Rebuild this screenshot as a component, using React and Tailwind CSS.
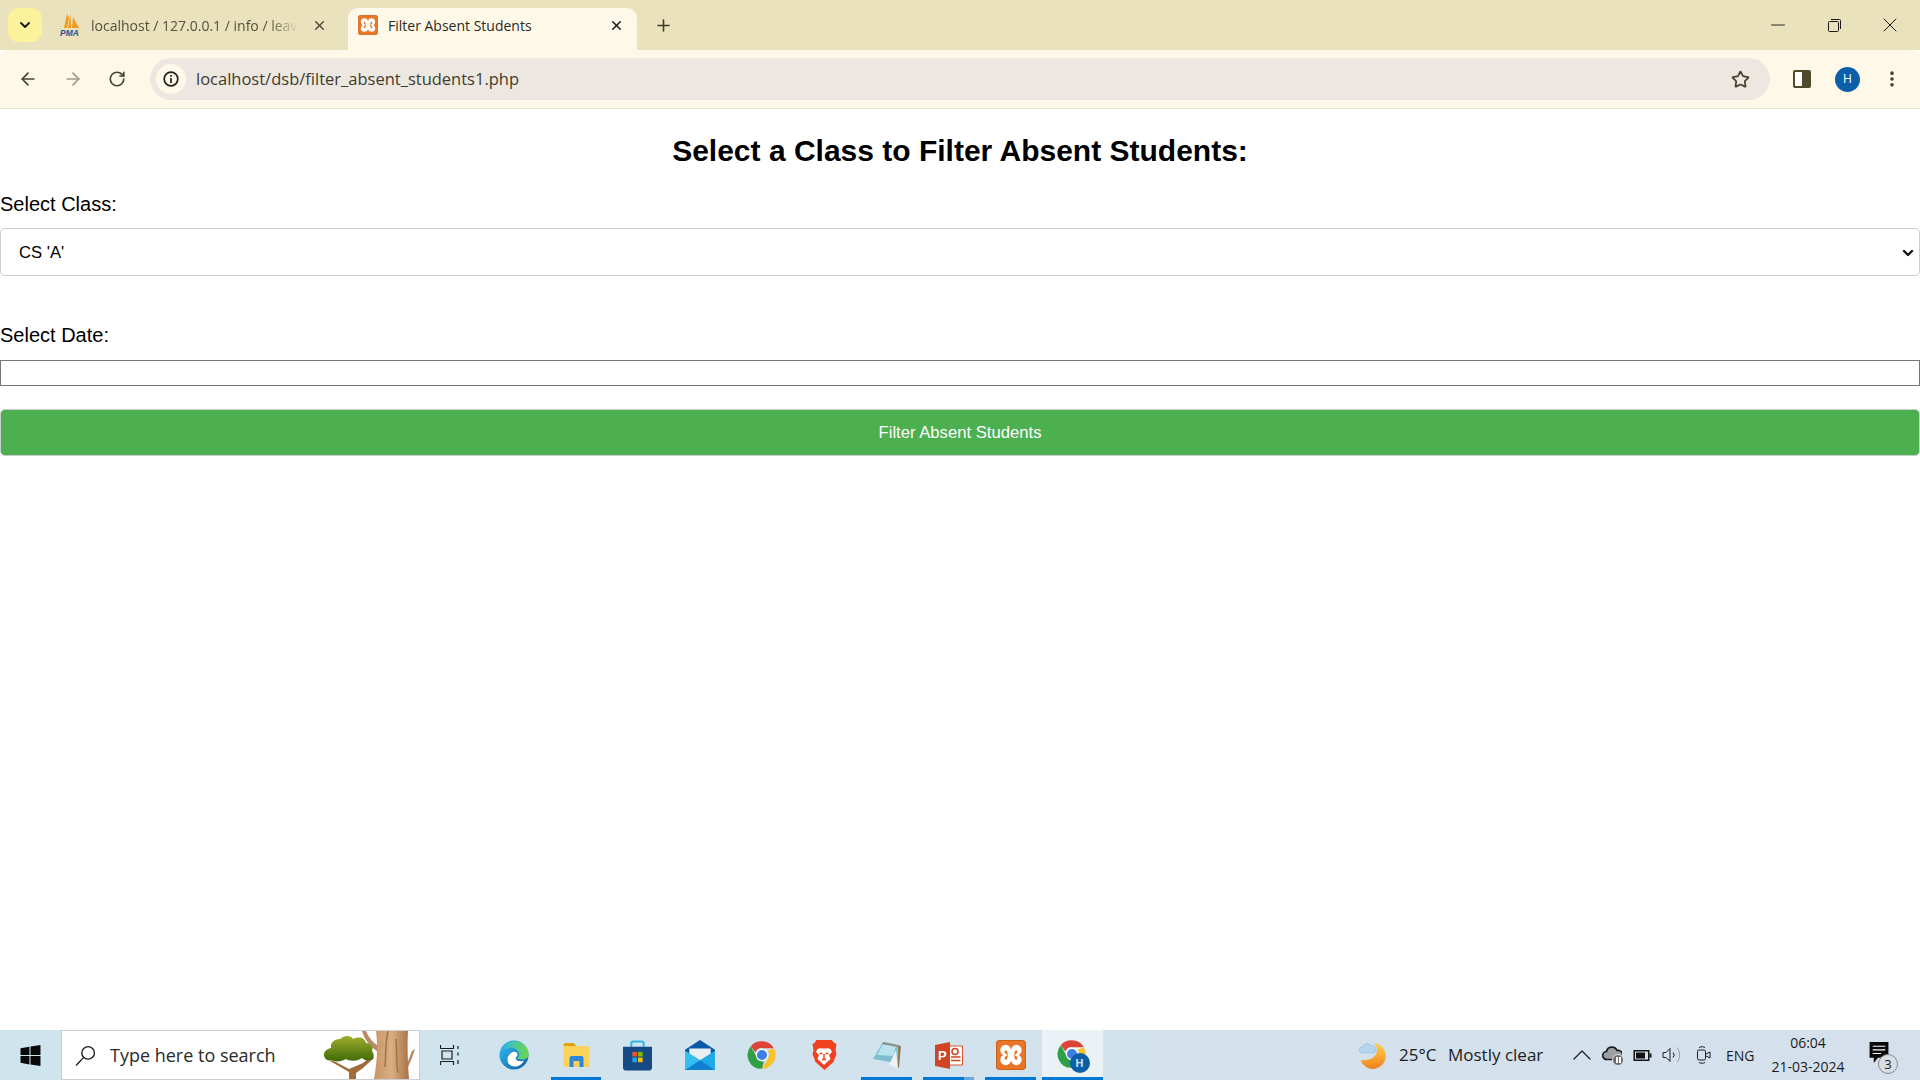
import React from 'react';
import { ArrowLeft, ArrowRight, RotateCw, Star, X, Plus, ChevronDown, ChevronUp, Minus, EllipsisVertical } from 'lucide-react';

const XamppIcon = ({ size = 18 }) => (
  <svg width={size} height={size} viewBox="0 0 28 28">
    <rect x="0.5" y="0.5" width="27" height="27" rx="3" fill="#ea7527" stroke="#c9601c" />
    <circle cx="9" cy="9.500" r="5" fill="#fff" />
    <circle cx="19" cy="9.500" r="5" fill="#fff" />
    <circle cx="9" cy="18.500" r="5" fill="#fff" />
    <circle cx="19" cy="18.500" r="5" fill="#fff" />
    <rect x="10" y="9" width="8" height="10" fill="#fff" />
    <path d="M11 14c-1-.5-3-1-3-3.500 0-1 1.500-1.500 2-.5.500.8 1 1.500 1 4zM17 14c1-.5 3-1 3-3.500 0-1-1.500-1.500-2-.5-.5.800-1 1.500-1 4zM11 14c-1 .5-3 1-3 3.500 0 1 1.500 1.500 2 .5.500-.8 1-1.500 1-4zM17 14c1 .5 3 1 3 3.500 0 1-1.500 1.500-2 .5-.5-.8-1-1.500-1-4z" fill="#ea7527" />
  </svg>
);

const PmaIcon = () => (
  <svg width="20" height="24" viewBox="0 0 20 24">
    <path d="M7 1 4 15h3L9 5zM10.500 0 8 15h3zM13 4l-1 11h7z" fill="#f29b1d" />
    <text x="0" y="23" fontSize="8.500" fontWeight="700" fontStyle="italic" fill="#2b4f93" fontFamily="Liberation Sans, sans-serif">PMA</text>
  </svg>
);

const ChromeIcon = ({ size = 30 }) => (
  <svg width={size} height={size} viewBox="0 0 48 48">
    <path d="M24 2a22 22 0 0 1 19 11H24a11 11 0 0 0-10.500 7L6 10A22 22 0 0 1 24 2z" fill="#db4437" />
    <path d="M43 13a22 22 0 0 1-19 33l9.500-16.500A11 11 0 0 0 33 17z" fill="#fbc02d" />
    <path d="M24 46A22 22 0 0 1 6 10l9 16a11 11 0 0 0 12 8.500z" fill="#2f9e44" />
    <circle cx="24" cy="24" r="10" fill="#fff" />
    <circle cx="24" cy="24" r="8" fill="#3f7ee8" />
  </svg>
);

const EdgeIcon = () => (
  <svg width="30" height="30" viewBox="0 0 30 30">
    <defs>
      <linearGradient id="edgeA" x1="0" y1="0" x2="1" y2="1">
        <stop offset="0" stopColor="#35c1f1" />
        <stop offset="1" stopColor="#0c59a4" />
      </linearGradient>
      <linearGradient id="edgeB" x1="0" y1="0" x2="1" y2="0">
        <stop offset="0" stopColor="#2fb8e0" />
        <stop offset="1" stopColor="#6fd84a" />
      </linearGradient>
    </defs>
    <circle cx="15" cy="15" r="14.500" fill="url(#edgeA)" />
    <path d="M4 9C7 2 15 0 21 2c5 2 9 7 8.500 13 0 3-3 4.500-6.500 4.500-3 0-5-1-5-1.500 2-1 3-3 1.500-6C18 9 14 7 10 8c-2 .5-4 1-6 1z" fill="url(#edgeB)" />
    <path d="M14 12c3-1 5 1 4.500 3-.5 2-3 3-1 5 2 1.500 5 1.500 7.500.5-2 4-6 6.500-10 6-5-.5-7-4-6.500-8 .5-3 3-5.500 5.500-6.500z" fill="#fff" />
  </svg>
);

const ExplorerIcon = () => (
  <svg width="27" height="24" viewBox="0 0 26 24">
    <path d="M0 2a2 2 0 0 1 2-2h8l3 3H0z" fill="#e2a208" />
    <rect x="0" y="3" width="26" height="21" rx="1.500" fill="#fbd35a" />
    <path d="M6 24V15a2 2 0 0 1 2-2h10a2 2 0 0 1 2 2v9h-4v-6h-6v6z" fill="#2e86d8" />
  </svg>
);

const StoreIcon = () => (
  <svg width="29" height="31" viewBox="0 0 28 29">
    <path d="M8 6V3a2 2 0 0 1 2-2h8a2 2 0 0 1 2 2v3" fill="none" stroke="#2fb6ea" strokeWidth="2" />
    <path d="M0 6h28v20a3 3 0 0 1-3 3H3a3 3 0 0 1-3-3z" fill="#154a84" />
    <rect x="9" y="11" width="4.500" height="4.500" fill="#e8532b" />
    <rect x="14.500" y="11" width="4.500" height="4.500" fill="#7fb800" />
    <rect x="9" y="16.500" width="4.500" height="4.500" fill="#1ea2e8" />
    <rect x="14.500" y="16.500" width="4.500" height="4.500" fill="#ffb900" />
  </svg>
);

const MailIcon = () => (
  <svg width="30" height="30" viewBox="0 0 28 28">
    <path d="M14 0 28 9v3L14 20 0 12V9z" fill="#0a58a8" />
    <path d="M4 8h20v8l-10 6-10-6z" fill="#e9eef2" />
    <path d="M0 10l14 9 14-9v18H0z" fill="#22a9ea" />
    <path d="M0 28 0 10l14 9 14 9z" fill="#35bdf0" />
    <path d="M0 28 14 19l14 9z" fill="#0f7fd0" />
  </svg>
);

const BraveIcon = () => (
  <svg width="26" height="30" viewBox="0 0 25 30">
    <path d="M5 0h15l3 3 2 1-1 6 1 4-3 8-9 8-9-8-3-8 1-4-1-6 2-1z" fill="#f1411f" />
    <path d="M6 9c2-1.500 4-.5 6.500-.5S17 7.500 19 9l1.500 3-3 3 1.500 4-6.500 6L6 19l1.500-4-3-3z" fill="#fff" />
    <path d="M8 13.500h3M14 13.500h3M12.500 14v5M10.500 19.500h4" stroke="#f1411f" strokeWidth="1.500" fill="none" />
  </svg>
);

const NotepadIcon = () => (
  <svg width="29" height="28" viewBox="0 0 29 28">
    <path d="M11 1 26 4 24 22 1 18z" fill="#7cbdd2" />
    <path d="M11 3 24 5 21 15 5 14z" fill="#b8e2ec" />
    <path d="M11 1 26 4l-.5 2L10 3z" fill="#8a8f88" />
    <path d="M26 4 29 5 27 27l-2-1z" fill="#8d7f52" />
    <path d="M24 9 26 27 17 24z" fill="#eef1ef" />
  </svg>
);

const PowerPointIcon = () => (
  <svg width="28" height="27" viewBox="0 0 28 27">
    <rect x="12" y="4" width="15.500" height="19" fill="#fff" stroke="#d4573a" />
    <circle cx="20" cy="9.500" r="3" fill="none" stroke="#d04423" strokeWidth="1.500" />
    <path d="M16 15h9.500M16 18.500h9.500" stroke="#d04423" strokeWidth="1.500" />
    <path d="M0 3 15 0v27L0 24z" fill="#d04423" />
    <text x="3" y="18" fontSize="13" fontWeight="700" fill="#fff" fontFamily="Liberation Sans, sans-serif">P</text>
  </svg>
);

const ChromeUserIcon = () => (
  <div className="relative w-[32px] h-[32px]">
    <ChromeIcon size={30} />
    <div className="absolute right-[-1px] bottom-[-2px] w-[20px] h-[20px] rounded-full bg-[#0b5ea8] text-[#cfe0ee] text-[11px] font-bold flex items-center justify-center">H</div>
  </div>
);

const Tree = () => (
  <svg width="97" height="48" viewBox="0 0 97 48" className="shrink-0">
    <defs>
      <linearGradient id="crown" x1="0" y1="0" x2="0" y2="1">
        <stop offset="0" stopColor="#9fae2c" />
        <stop offset="1" stopColor="#3f6a08" />
      </linearGradient>
      <linearGradient id="trunk" x1="0" y1="0" x2="1" y2="0">
        <stop offset="0" stopColor="#c99566" />
        <stop offset="0.500" stopColor="#d9ae84" />
        <stop offset="1" stopColor="#a87345" />
      </linearGradient>
    </defs>
    <path d="M42 0h4c3 7 7 12 14 16v6C51 17 45 10 42 0zM85 38l7-18 3-2-3 9-7 16z" fill="#b98a63" />
    <path d="M56 0h32c-1 16 0 34 1 48H54c3-16 4-32 2-48z" fill="url(#trunk)" />
    <path d="M68 0c-3 14-2 24-3 36M76 8c1 10 0 22 2 34" stroke="#a67148" strokeWidth="1.500" fill="none" />
    <path d="M29 48V41L10 30l2-1 17 9 14-6 9-7 2 2-11 10-7 5v6z" fill="#a26b3c" />
    <path d="M5 27c-3-5 1-9 6-10-1-5 3-9 9-9 4-4 11-4 13 0 6-3 12-1 13 4 5 0 8 4 6 8 3 4 2 9-2 9-3 1-6 0-8-2-6 4-13 3-16 1-5 3-11 3-14 1-3 1-6 0-7-2z" fill="url(#crown)" />
  </svg>
);

const TaskSlot = ({ className = '', active, line, split, children }) => (
  <div className={`relative h-full shrink-0 flex items-center justify-center ${className} ${active ? 'bg-[#ebf2f6]' : ''}`}>
    {children}
    {line && <div className="absolute left-0 right-0 bottom-0 h-[3px] bg-[#0078d4]" />}
    {split && <div className="absolute right-0 bottom-0 w-[10px] h-[3px] bg-[#64a9e4]" />}
  </div>
);

const BrowserChrome = () => (
  <div className="font-['Open_Sans',sans-serif]">
    {/* tab strip */}
    <div className="h-[50px] bg-[#e9e2bc] flex items-end">
      <div className="w-[34px] h-[34px] shrink-0 ml-[8px] mb-[8px] rounded-[11px] bg-[#fdf29c] flex items-center justify-center text-[#1f1f1f]">
        <ChevronDown size={16} strokeWidth={3} />
      </div>
      <div className="w-[306px] h-[42px] shrink-0 pb-[8px] pl-[18px] flex items-center text-[14px] text-[#54513f]">
        <PmaIcon />
        <span className="ml-[11px] w-[208px] whitespace-nowrap overflow-hidden [mask-image:linear-gradient(to_right,black_85%,transparent)]">localhost / 127.0.0.1 / info / leave</span>
        <X size={15} strokeWidth={2.500} className="ml-[13px] shrink-0" />
      </div>
      <div className="w-[289px] h-[42px] shrink-0 rounded-t-[10px] bg-[#fef8e9] flex items-center pb-[8px] pl-[10px] text-[14px] text-[#2b2a20]">
        <XamppIcon size={20} />
        <span className="ml-[10px] w-[221px] whitespace-nowrap">Filter Absent Students</span>
        <X size={15} strokeWidth={2.500} className="text-[#1f1f1f]" />
      </div>
      <div className="w-[52px] h-[42px] pb-[8px] flex items-center justify-center text-[#3f3c2a]">
        <Plus size={19} strokeWidth={2} />
      </div>
      <div className="flex-1" />
      <div className="h-[50px] flex items-center text-[#1a1a1a]">
        <div className="w-[56px] flex justify-center"><Minus size={22} strokeWidth={1} /></div>
        <div className="w-[56px] flex justify-center">
          <svg width="13" height="13" viewBox="0 0 13 13" fill="none" stroke="currentColor">
            <rect x="0.500" y="2.500" width="10" height="10" rx="1" />
            <path d="M3 .5h8.500a1 1 0 0 1 1 1V10" />
          </svg>
        </div>
        <div className="w-[58px] pr-[2px] flex justify-center"><X size={24} strokeWidth={1} /></div>
      </div>
    </div>
    {/* toolbar */}
    <div className="h-[59px] bg-[#fef8e9] border-b border-[#e8e3cc] rounded-t-[8px] flex items-center text-[#45432f]">
      <div className="w-[150px] flex items-center pl-[18px] gap-[25px]">
        <ArrowLeft size={20} strokeWidth={2} />
        <ArrowRight size={20} strokeWidth={2} className="text-[#9c9a89]" />
        <RotateCw size={18} strokeWidth={2.200} />
      </div>
      <div className="w-[1620px] h-[42px] rounded-full bg-[#ece8e1] flex items-center pl-[6px] pr-[20px]">
        <div className="w-[30px] h-[30px] rounded-full bg-[#fef8e9] flex items-center justify-center">
          <svg width="16" height="16" viewBox="0 0 16 16" fill="none" stroke="#1f1f1f" strokeWidth="1.700">
            <circle cx="8" cy="8" r="6.800" />
            <path d="M8 7v5M8 4v1.700" />
          </svg>
        </div>
        <span className="ml-[10px] text-[16.5px] text-[#3f3c2e] flex-1">localhost/dsb/filter_absent_students1.php</span>
        <Star size={19} strokeWidth={2.200} />
      </div>
      <div className="ml-[23px] w-[18px] h-[18px] rounded-[2px] border-[2px] border-[#4e4a2b] bg-[#fff] flex justify-end">
        <div className="w-[7px] h-full bg-[#4e4a2b]" />
      </div>
      <div className="ml-[24px] w-[25px] h-[25px] rounded-full bg-[#0b5ea8] text-white text-[12px] flex items-center justify-center">H</div>
      <EllipsisVertical size={20} strokeWidth={2.400} className="ml-[22px]" />
    </div>
  </div>
);

const Taskbar = () => (
  <div className="h-[50px] flex items-stretch bg-gradient-to-r from-[#cfe5ee] to-[#d5e0ec] font-['Open_Sans',sans-serif] text-[#1c1c1c]">
    <div className="w-[61px] shrink-0 flex items-center justify-center">
      <svg width="21" height="21" viewBox="0 0 19 20" fill="#0a0a0a">
        <path d="M0 3 8.500 1.600V9.500H0zM9.500 1.400 19 0v9.500H9.500zM0 10.500h8.500v8L0 17zM9.500 10.500H19V20l-9.500-1.400z" />
      </svg>
    </div>
    <div className="w-[359px] shrink-0 h-[50px] bg-white border border-[#c9cdd0] flex items-center overflow-hidden">
      <svg width="21" height="21" viewBox="0 0 20 20" fill="none" stroke="#1c1c1c" strokeWidth="1.300" className="ml-[13px] shrink-0">
        <circle cx="12.500" cy="7.500" r="6" />
        <path d="M8 12 1 19.500" />
      </svg>
      <span className="ml-[14px] w-[210px] shrink-0 text-[18px] text-[#2a2a2a] whitespace-nowrap">Type here to search</span>
      <Tree />
    </div>
    <TaskSlot className="w-[60px]">
      <svg width="20" height="20" viewBox="0 0 19 20" fill="none" stroke="#1c1c1c" strokeWidth="1.200">
        <path d="M0 3.500h13V0M0 0v3.500M0 16.500h13V20M0 20v-3.500M1.500 6h10v8h-10zM17.500 1v3M17.500 7.500v3M17.500 15v4" />
      </svg>
    </TaskSlot>
    <TaskSlot className="w-[68px]"><EdgeIcon /></TaskSlot>
    <div className="w-[3px] shrink-0" />
    <TaskSlot className="w-[50px]" line><ExplorerIcon /></TaskSlot>
    <TaskSlot className="w-[72px]"><StoreIcon /></TaskSlot>
    <TaskSlot className="w-[54px]"><MailIcon /></TaskSlot>
    <TaskSlot className="w-[70px]"><ChromeIcon /></TaskSlot>
    <TaskSlot className="w-[54px]"><BraveIcon /></TaskSlot>
    <div className="w-[10px] shrink-0" />
    <TaskSlot className="w-[51px]" line><NotepadIcon /></TaskSlot>
    <div className="w-[11px] shrink-0" />
    <TaskSlot className="w-[51px]" line split><PowerPointIcon /></TaskSlot>
    <div className="w-[11px] shrink-0" />
    <TaskSlot className="w-[51px]" line><XamppIcon size={30} /></TaskSlot>
    <div className="w-[6px] shrink-0" />
    <TaskSlot className="w-[61px]" active line><ChromeUserIcon /></TaskSlot>
    <div className="flex-1" />
    {/* tray */}
    <div className="flex items-center">
      <svg width="29" height="30" viewBox="0 0 28 30">
        <defs>
          <linearGradient id="moon" x1="0" y1="0" x2="0" y2="1">
            <stop offset="0" stopColor="#ffd24a" />
            <stop offset="1" stopColor="#f2821f" />
          </linearGradient>
        </defs>
        <path d="M16 3a13 13 0 1 1-14 17c6 1 14-1 16-7 1-4 0-7-2-10z" fill="url(#moon)" />
        <path d="M3 13a3 3 0 0 1 1-6 5 5 0 0 1 9-1 3.500 3.500 0 0 1 2 7z" fill="#b5d4ee" stroke="#8ebce2" strokeWidth="0.600" />
      </svg>
      <span className="ml-[12px] w-[37px] text-[17px] whitespace-nowrap">25°C</span>
      <span className="ml-[12px] w-[95px] text-[17px] whitespace-nowrap">Mostly clear</span>
      <ChevronUp size={32} strokeWidth={0.900} className="ml-[23px]" />
      <div className="relative ml-[4px] w-[20px] h-[20px]">
        <svg width="20" height="17" viewBox="0 0 20 16" fill="none" stroke="#1c1c1c" strokeWidth="1.700">
          <path d="M5 14a4 4 0 0 1-.5-8A5.500 5.500 0 0 1 15 5a4.500 4.500 0 0 1 2 9z" fill="#9aa0a4" />
        </svg>
        <div className="absolute right-[-2px] bottom-[-1px] w-[12px] h-[12px] rounded-full bg-[#6c6c6c] border border-[#dfe6ec] flex items-center justify-center gap-[1px]">
          <div className="w-[2px] h-[6px] bg-white" />
          <div className="w-[2px] h-[6px] bg-white" />
        </div>
      </div>
      <svg width="19" height="11" viewBox="0 0 18 11" className="ml-[11px]">
        <rect x="0.750" y="0.750" width="14.500" height="9.500" fill="none" stroke="#111" strokeWidth="1.500" />
        <rect x="2.500" y="2.500" width="9" height="6" fill="#111" />
        <rect x="16" y="3.500" width="2" height="4" fill="#111" />
      </svg>
      <svg width="20" height="18" viewBox="0 0 20 18" fill="none" stroke="#1c1c1c" className="ml-[10px]">
        <path d="M1 6.500h3L8 2.500v13l-4-4H1zM11 6.500a3.500 3.500 0 0 1 0 5" />
        <path d="M15 1.500c3.500 4 3.500 11 0 15" stroke="#9aa0a4" />
      </svg>
      <svg width="15" height="20" viewBox="0 0 15 20" fill="none" stroke="#1c1c1c" className="ml-[14px]">
        <rect x="1.500" y="5" width="8" height="10" rx="1.500" />
        <path d="M10 9l4-2v6l-4-2M3 2.500c2-1 4-1 6 0M3 17.500c2 1 4 1 6 0" />
      </svg>
      <span className="ml-[15px] w-[28px] text-[14px]">ENG</span>
    </div>
    <div className="ml-[16px] w-[76px] flex flex-col items-center justify-center text-[14px] leading-[24px] whitespace-nowrap">
      <span>06:04</span>
      <span>21-03-2024</span>
    </div>
    <div className="relative ml-[23px] w-[51px] flex items-center">
      <svg width="20" height="22" viewBox="0 0 18 21" className="mb-[5px]">
        <path d="M0 0h18v15H8l-4 5v-5H0z" fill="#0a0a0a" />
        <path d="M3 4h12M3 7.500h12M3 11h8" stroke="#fff" strokeWidth="1" />
      </svg>
      <div className="absolute left-[9px] top-[24px] w-[20px] h-[20px] rounded-full bg-[#d8dde3] border border-[#8a8a8a] text-[13px] leading-[18px] text-center">3</div>
    </div>
  </div>
);

const App = () => {
  return (
    <div className="w-[1920px] h-[1080px] flex flex-col bg-white overflow-hidden">
      <BrowserChrome />
      <main className="flex-1 font-['Liberation_Sans',Arial,sans-serif] text-black">
        <h2 className="mt-[22px] h-[40px] text-[30px] leading-[40px] font-bold text-center">Select a Class to Filter Absent Students:</h2>
        <label className="block mt-[22px] text-[20px] leading-[23px]">Select Class:</label>
        <div className="relative mt-[12px]">
          <select defaultValue="a" className="block w-full h-[48px] pl-[18px] pr-[30px] text-[16.67px] bg-white border border-[#cccccc] rounded-[5px] appearance-none">
            <option value="a">CS 'A'</option>
            <option value="b">CS 'B'</option>
          </select>
          <ChevronDown size={16} strokeWidth={3.500} className="absolute right-[4px] top-[17px] text-[#111] pointer-events-none" />
        </div>
        <label className="block mt-[48px] text-[20px] leading-[23px]">Select Date:</label>
        <input type="text" className="block w-full h-[26px] mt-[13px] border border-[#767676]" />
        <button className="block w-full h-[47px] mt-[23px] bg-[#4caf50] text-white text-[16.67px] border border-[#cccccc] rounded-[5px]">Filter Absent Students</button>
      </main>
      <Taskbar />
    </div>
  );
};

export default App;
